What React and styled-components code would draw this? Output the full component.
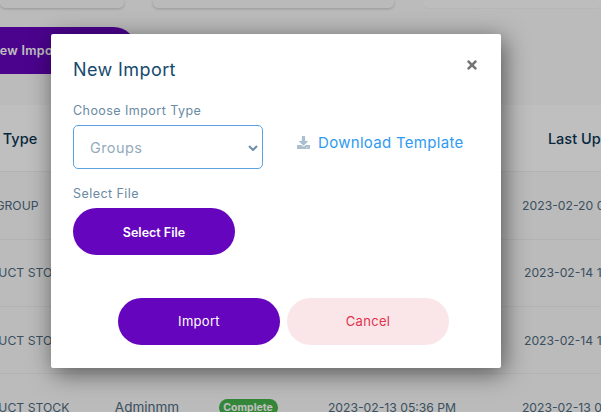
import React from "react"
import styled, { createGlobalStyle } from "styled-components"
import { FaDownload, FaTimes } from "react-icons/fa"

const Global = createGlobalStyle`
    html, body {
        margin: 0;
        padding: 0;
        height: 100%;
        overflow: hidden;
        background: #fafafa;
    }
    * {
        box-sizing: border-box;
        font-family: Inter, "Open Sans", sans-serif;
    }
`

const Page = styled.div`
    position: relative;
    width: 601px;
    height: 412px;
    overflow: hidden;
`

const Cards = styled.div`
    display: grid;
    grid-template-columns: 124px 241px 179px;
    column-gap: 29px;
    height: 8px;
`

const Card = styled.div`
    background: ${p => (p.$flat ? "#fdfdfd" : "#f8f8f8")};
    border-radius: 0 0 5px 5px;
    box-shadow: ${p => (p.$flat ? "0 1px 1px rgba(0,0,0,.03)" : "0 1px 3px rgba(0,0,0,.2)")};
`

const NewButton = styled.button`
    display: flex;
    align-items: center;
    justify-content: flex-end;
    width: 137px;
    height: 47px;
    margin-top: 19px;
    padding: 0 74px 0 0;
    border: 0;
    border-radius: 0 24px 24px 0;
    background: #6505bd;
    color: #fff;
    font-size: 12.5px;
    font-weight: 600;
    letter-spacing: 0.3px;
    white-space: nowrap;
`

const Table = styled.div`
    margin: 31px 0 0 -36px;
    width: 696px;
`

const Row = styled.div`
    display: grid;
    grid-template-columns: 106px 154px 48px 240px 148px;
    align-items: center;
    height: 67.3px;
    border-bottom: 1px solid #efefef;
    background: ${p => (p.$head ? "#ffffff" : "transparent")};
    color: ${p => (p.$head ? "#0b3552" : "#4e6a80")};
    font-size: ${p => (p.$head ? "14.5px" : "12.2px")};
    font-weight: ${p => (p.$head ? 450 : 400)};
`

const Cell = styled.div`
    display: flex;
    justify-content: center;
    white-space: nowrap;
    padding-left: ${p => p.$pad || 0}px;
    font-size: ${p => (p.$size ? `${p.$size}px` : "inherit")};
`

const Badge = styled.span`
    flex: none;
    width: 59px;
    height: 17px;
    border-radius: 9px;
    background: #46b34b;
    color: #fff;
    font-size: 10.5px;
    font-weight: 700;
    line-height: 17px;
    text-align: center;
`

const Overlay = styled.div`
    position: absolute;
    inset: 0;
    background: rgba(0, 0, 0, 0.25);
`

const Modal = styled.div`
    position: absolute;
    left: 51px;
    top: 34px;
    width: 450px;
    height: 334px;
    padding: 22px 22px 0;
    background: #fff;
    border-radius: 2px;
    box-shadow: 3px 5px 24px rgba(0, 0, 0, 0.55);
    display: flex;
    flex-direction: column;
`

const Title = styled.h2`
    margin: 0;
    color: #164a6e;
    font-size: 18px;
    font-weight: 400;
    letter-spacing: 0.4px;
    line-height: 27px;
`

const Close = styled.button`
    position: absolute;
    top: 24px;
    right: 22px;
    padding: 0;
    border: 0;
    background: none;
    color: #757575;
    font-size: 14px;
    line-height: 0;
`

const Label = styled.div`
    color: #6b8aa3;
    font-size: 12.5px;
    letter-spacing: 0.45px;
    line-height: 18px;
    margin-top: ${p => p.$top || 0}px;
`

const TypeRow = styled.div`
    display: flex;
    align-items: center;
    margin-top: 5px;
`

const SelectWrap = styled.div`
    position: relative;
    width: 190px;
    height: 44px;
`

const Select = styled.select`
    width: 100%;
    height: 100%;
    padding: 0 0 0 16px;
    appearance: none;
    border: 1px solid #5ba4df;
    border-radius: 5px;
    background: #fff;
    color: #94abbd;
    font-size: 14.5px;
    letter-spacing: 0.4px;
`

const Chevron = styled.svg`
    position: absolute;
    right: 5px;
    top: 20px;
    width: 10px;
    height: 6px;
`

const Download = styled.a`
    display: flex;
    align-items: center;
    gap: 8px;
    margin: -9px 0 0 34px;
    color: #2f9bef;
    font-size: 15px;
    letter-spacing: 0.3px;
    white-space: nowrap;
    svg {
        color: #a9bfd0;
        font-size: 13px;
    }
`

const Pill = styled.button`
    flex: none;
    width: 162px;
    height: 47px;
    margin-top: ${p => p.$top || 0}px;
    border: 0;
    border-radius: 24px;
    background: ${p => (p.$cancel ? "#fae6e8" : "#6505bd")};
    color: ${p => (p.$cancel ? "#e0334f" : "#fff")};
    font-size: ${p => (p.$bold ? "12.5px" : "13px")};
    font-weight: ${p => (p.$bold ? 600 : 400)};
    letter-spacing: ${p => (p.$bold ? 0 : "0.3px")};
    padding-bottom: ${p => (p.$bold ? 0 : "2px")};
`

const Footer = styled.div`
    display: flex;
    justify-content: center;
    gap: 7px;
    margin-top: 43px;
    padding-left: 15px;
`

const rows = [
    { type: "GROUP", date: "", updated: "2023-02-20 05:12 PM" },
    { type: "PRODUCT STOCK", date: "", updated: "2023-02-14 11:20 AM" },
    { type: "PRODUCT STOCK", date: "", updated: "2023-02-14 11:02 AM" },
    { type: "PRODUCT STOCK", user: "Adminmm", status: "Complete", date: "2023-02-13 05:36 PM", updated: "2023-02-13 05:36 PM" },
]

function App() {
    return (
        <Page>
            <Global />
            <Cards>
                <Card />
                <Card />
                <Card $flat />
            </Cards>
            <NewButton>New Import</NewButton>
            <Table>
                <Row $head>
                    <Cell $pad={6}>Type</Cell>
                    <Cell>User</Cell>
                    <Cell>Status</Cell>
                    <Cell>Created</Cell>
                    <Cell $pad={16}>Last Updated</Cell>
                </Row>
                {rows.map((row, i) => (
                    <Row key={i}>
                        <Cell>{row.type}</Cell>
                        <Cell $size={13.5}>{row.user}</Cell>
                        <Cell>{row.status ? <Badge>{row.status}</Badge> : null}</Cell>
                        <Cell>{row.date}</Cell>
                        <Cell>{row.updated}</Cell>
                    </Row>
                ))}
            </Table>
            <Overlay />
            <Modal>
                <Title>New Import</Title>
                <Close aria-label="Close"><FaTimes /></Close>
                <Label $top={19}>Choose Import Type</Label>
                <TypeRow>
                    <SelectWrap>
                        <Select defaultValue="Groups">
                            <option>Groups</option>
                        </Select>
                        <Chevron viewBox="0 0 10 6">
                            <path d="M1 1l4 4 4-4" fill="none" stroke="#6e8ea8" strokeWidth="2" />
                        </Chevron>
                    </SelectWrap>
                    <Download><FaDownload />Download Template</Download>
                </TypeRow>
                <Label $top={16}>Select File</Label>
                <Pill $bold $top={5}>Select File</Pill>
                <Footer>
                    <Pill>Import</Pill>
                    <Pill $cancel>Cancel</Pill>
                </Footer>
            </Modal>
        </Page>
    )
}

export default App
